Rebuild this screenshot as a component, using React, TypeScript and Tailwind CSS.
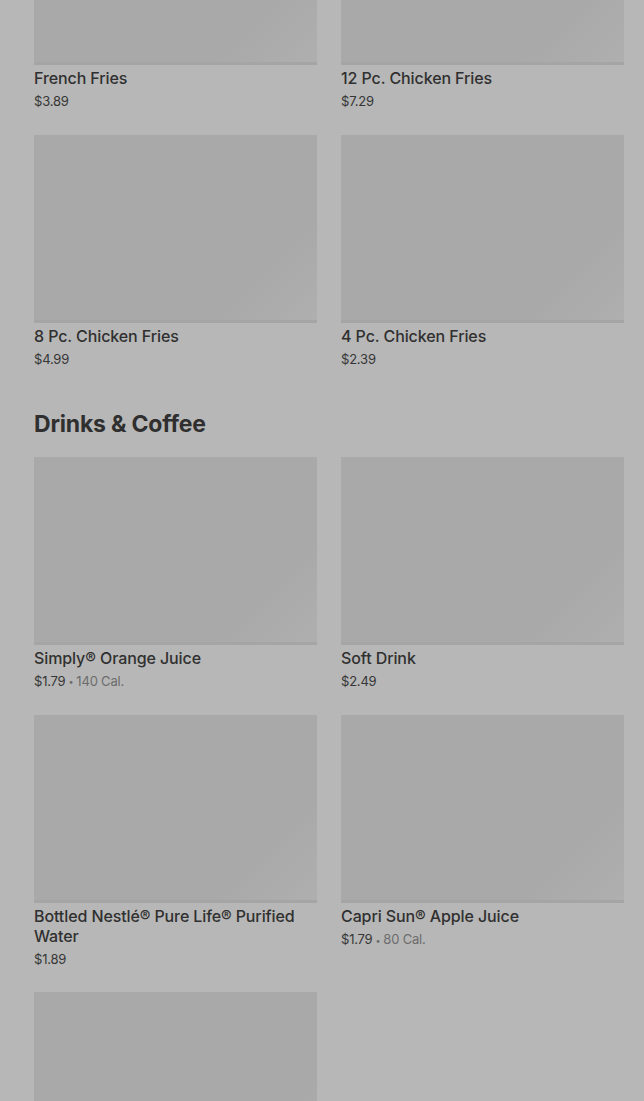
import React from "react";

type Item = { name: string; price: string; cal?: string };

const fries: Item[] = [
  { name: "French Fries", price: "$3.89" },
  { name: "12 Pc. Chicken Fries", price: "$7.29" },
  { name: "8 Pc. Chicken Fries", price: "$4.99" },
  { name: "4 Pc. Chicken Fries", price: "$2.39" },
];

const drinks: Item[] = [
  { name: "Simply® Orange Juice", price: "$1.79", cal: "140 Cal." },
  { name: "Soft Drink", price: "$2.49" },
  { name: "Bottled Nestlé® Pure Life® Purified Water", price: "$1.89" },
  { name: "Capri Sun® Apple Juice", price: "$1.79", cal: "80 Cal." },
  { name: "", price: "" },
];

function Card({ item }: { item: Item }) {
  return (
    <div className="flex flex-col">
      <div className="h-[188px] w-full bg-[linear-gradient(135deg,#a9a9a9_0%,#a9a9a9_78%,#afafaf_100%)] border-b-[3px] border-[#a5a5a5]" />
      {item.name && (
        <>
          <div className="mt-[3px] text-[16px] leading-5 font-medium text-[#303030] tracking-[-0.1px]">
            {item.name}
          </div>
          <div className="mt-[4px] text-[13px] leading-[18px] text-[#363636] tracking-[-0.2px]">
            {item.price}
            {item.cal && (
              <span className="text-[#6c6c6c]">
                <span className="text-[9px] mx-[3px] align-middle">•</span>
                {item.cal}
              </span>
            )}
          </div>
        </>
      )}
    </div>
  );
}

export default function App() {
  return (
    <div
      className="w-[644px] h-[1101px] overflow-hidden bg-[#b7b7b7]"
      style={{ fontFamily: "Inter, 'Noto Sans', sans-serif" }}
    >
      <div className="mt-[-123px] pl-[34px] pr-[20px]">
        <div className="grid grid-cols-2 gap-x-[24px] gap-y-[25px]">
          {fries.map((it, i) => (
            <Card key={i} item={it} />
          ))}
        </div>
        <h2 className="mt-[42px] mb-[19px] text-[23px] leading-[28px] font-bold text-[#2f2f2f] tracking-[-0.2px]">
          Drinks &amp; Coffee
        </h2>
        <div className="grid grid-cols-2 gap-x-[24px] gap-y-[24px]">
          {drinks.map((it, i) => (
            <Card key={i} item={it} />
          ))}
        </div>
      </div>
    </div>
  );
}
